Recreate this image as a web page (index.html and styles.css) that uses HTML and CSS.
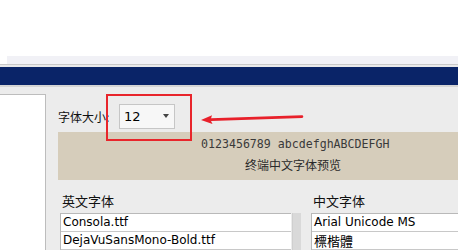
FILE: index.html
```html
<!DOCTYPE html>
<html>
<head>
<meta charset="utf-8">
<link rel="stylesheet" href="styles.css">
</head>
<body>
<div class="page">
  <div class="top"></div>
  <div class="band"></div>
  <div class="rule"></div>
  <div class="rule-light"></div>
  <div class="titlebar"></div>
  <div class="rule-under"></div>
  <div class="main">
    <div class="sidebar"></div>
    <div class="content">
      <div class="size-row">
        <span class="label size-label">字体大小:</span>
        <div class="combo">
          <span class="combo-value">12</span>
          <span class="combo-arrow"></span>
        </div>
      </div>
      <div class="preview">
        <div class="preview-mono">0123456789 abcdefghABCDEFGH</div>
        <div class="preview-cjk">终端中文字体预览</div>
      </div>
      <div class="fonts">
        <div class="font-col en">
          <div class="label col-label">英文字体</div>
          <div class="list-wrap">
            <ul class="list">
              <li>Consola.ttf</li>
              <li>DejaVuSansMono-Bold.ttf</li>
            </ul>
            <div class="scrollbar"></div>
          </div>
        </div>
        <div class="font-col cn">
          <div class="label col-label">中文字体</div>
          <ul class="list">
            <li>Arial Unicode MS</li>
            <li class="cjk-item">標楷體</li>
          </ul>
        </div>
      </div>
    </div>
  </div>
  <div class="highlight"></div>
  <svg class="arrow" width="110" height="12" viewBox="0 0 110 12">
    <path d="M10 7.6 L101 4.6" stroke="#e8202a" stroke-width="2.6" stroke-linecap="round" fill="none"/>
    <path d="M0 8 L11 3.2 L9.5 8 L11.5 12 Z" fill="#e8202a"/>
  </svg>
</div>
</body>
</html>
```

FILE: styles.css
```css
* { box-sizing: border-box; margin: 0; padding: 0; }
html, body { width: 458px; height: 250px; overflow: hidden; background: #fff; }
body { font-family: "DejaVu Sans", sans-serif; font-size: 12px; color: #000; }

.page { position: relative; width: 458px; height: 250px; display: flex; flex-direction: column; }

.top { height: 56px; background: #fff; flex: none; }
.band { height: 8px; margin-left: 7px; background: #f1f1f6; flex: none; }
.rule { height: 1px; background: #c9c9c9; flex: none; }
.rule-light { height: 2px; background: #e9e9ea; flex: none; }
.titlebar { height: 18px; background: #0a2468; flex: none; }
.rule-under { height: 2px; background: #d4d4d4; flex: none; }

.main { flex: 1; display: flex; background: #ececec; min-height: 0; }

.sidebar {
  width: 46px; margin-top: 7px; flex: none;
  background: #fff;
  border-top: 1px solid #bdbdbd;
  border-right: 1px solid #bdbdbd;
}

.content { flex: 1; margin-left: 12px; display: flex; flex-direction: column; min-width: 0; }

.label { font-family: "Noto Sans CJK SC", sans-serif; color: #111; }

.size-row { height: 45px; display: flex; align-items: center; padding-top: 13px; flex: none; }
.size-label { font-size: 12px; width: 61px; }
.combo {
  width: 56px; height: 25px;
  background: #f7f7f7;
  border: 1px solid #c6c6c6;
  display: flex; align-items: center; justify-content: space-between;
  padding: 0 5px 0 4px;
}
.combo-value { font-size: 13px; color: #000; }
.combo-arrow {
  width: 0; height: 0;
  border-left: 3.5px solid transparent;
  border-right: 3.5px solid transparent;
  border-top: 4px solid #444;
}

.preview {
  height: 48px; background: #d6cdbb; flex: none;
  display: flex; flex-direction: column;
}
.preview-mono {
  font-family: "DejaVu Sans Mono", monospace; font-size: 11.6px;
  color: #3a3a3a; padding-left: 143px; padding-top: 4px; height: 24px; line-height: 16px;
}
.preview-cjk {
  font-family: "Noto Sans CJK SC", sans-serif; font-size: 12px;
  color: #2a2a2a; padding-left: 187px; line-height: 18px;
}

.fonts { flex: 1; display: flex; padding-left: 2px; padding-top: 11px; gap: 10px; min-height: 0; }
.font-col { display: flex; flex-direction: column; }
.font-col.en { width: 241px; }
.font-col.cn { flex: 1; }
.col-label { font-size: 13px; height: 27px; line-height: 20px; padding-left: 2px; }

.list-wrap { display: flex; flex: 1; gap: 1px; }
.list {
  list-style: none; background: #fff; flex: 1;
  border-top: 1px solid #b9b9b9; border-left: 1px solid #b9b9b9;
}
.list li {
  height: 18px; line-height: 17px; padding-left: 2px;
  border-bottom: 1px solid #c8c8c8; font-size: 12px; white-space: nowrap;
}
.list li.cjk-item { font-family: "Noto Sans CJK TC", sans-serif; font-size: 13px; }
.scrollbar { width: 9px; background: #d9d9d9; border-left: 1px solid #cfcfcf; }

.highlight {
  position: absolute; left: 106px; top: 94px; width: 86px; height: 47px;
  border: 2px solid #e8252b;
}
.arrow { position: absolute; left: 201px; top: 112px; }
```
